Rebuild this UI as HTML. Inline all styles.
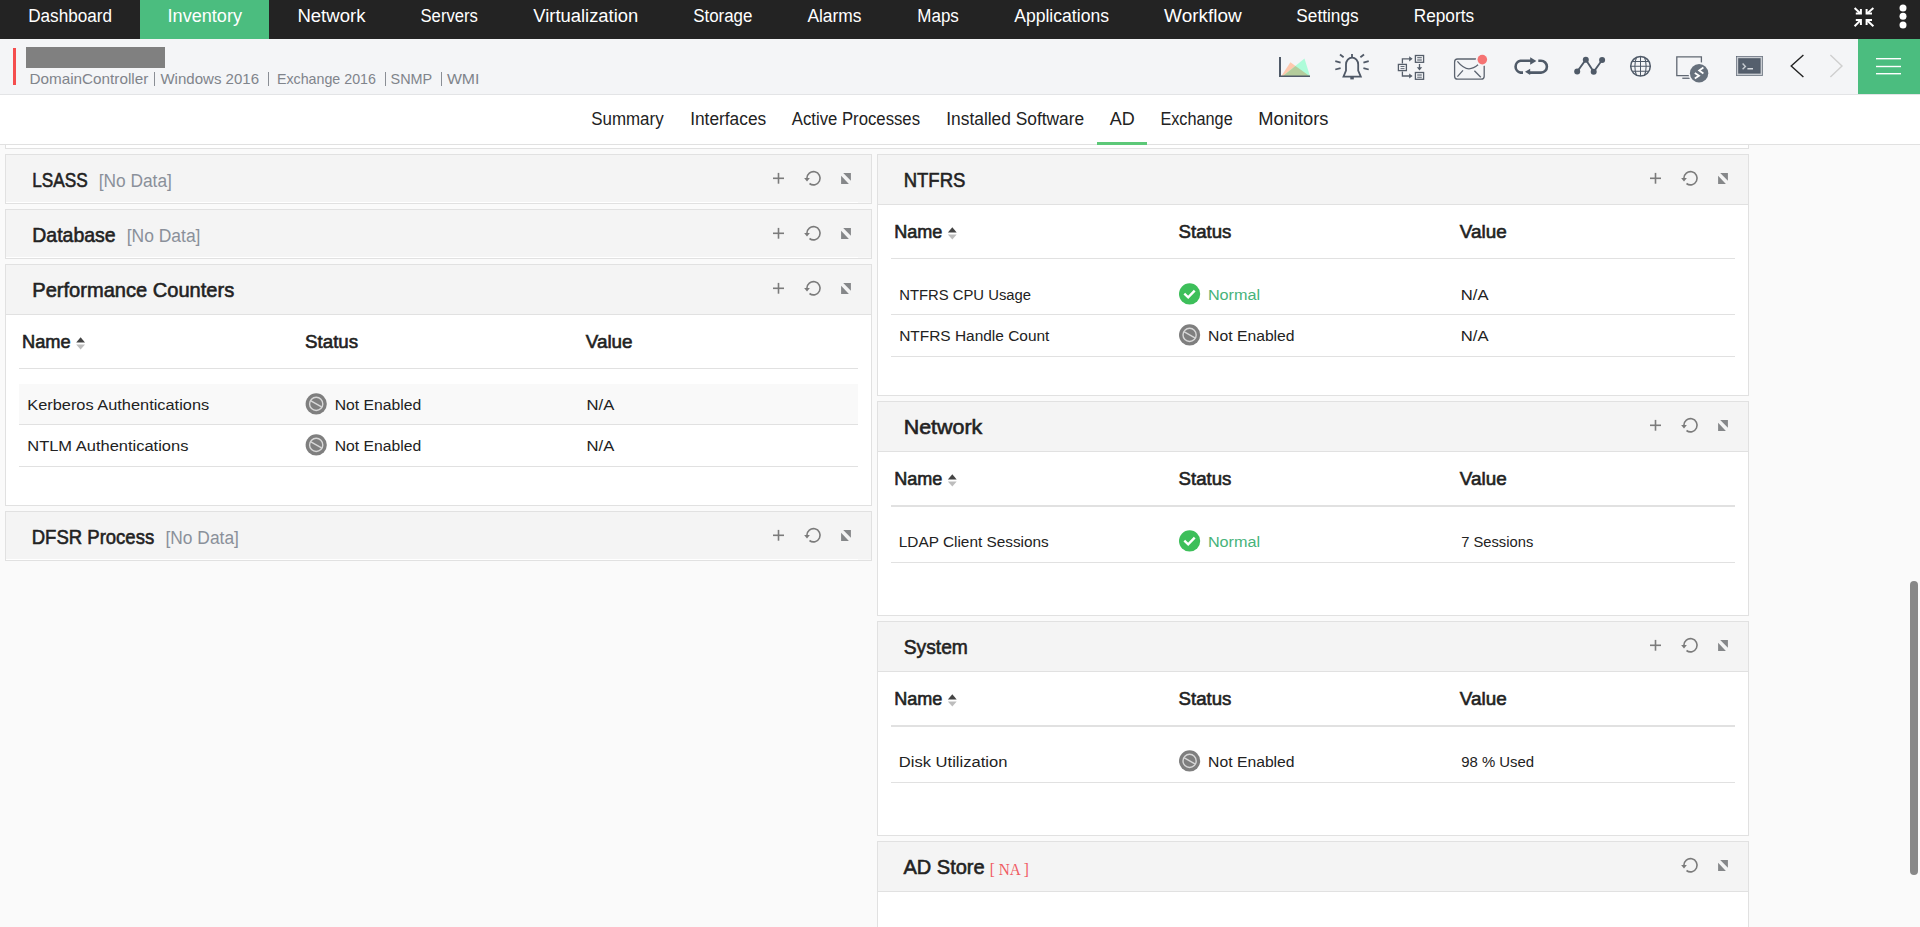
<!DOCTYPE html>
<html><head><meta charset="utf-8"><title>AD</title>
<style>
html,body{margin:0;padding:0;width:1920px;height:927px;overflow:hidden;background:#fafafa}
svg{display:block;font-family:"Liberation Sans", sans-serif}
</style></head><body>
<svg width="1920" height="927" viewBox="0 0 1920 927">
<rect x="0" y="0" width="1920" height="927" fill="#fafafa" />
<rect x="0" y="0" width="1920" height="39" fill="#232323" />
<rect x="140" y="0" width="129" height="39" fill="#4bbd7f" />
<text x="28.20" y="22" font-size="18" fill="#ffffff" textLength="83.80" lengthAdjust="spacingAndGlyphs">Dashboard</text>
<text x="167.60" y="22" font-size="18" fill="#ffffff" textLength="74.41" lengthAdjust="spacingAndGlyphs">Inventory</text>
<text x="297.40" y="22" font-size="18" fill="#ffffff" textLength="68.05" lengthAdjust="spacingAndGlyphs">Network</text>
<text x="420.50" y="22" font-size="18" fill="#ffffff" textLength="57.41" lengthAdjust="spacingAndGlyphs">Servers</text>
<text x="533.30" y="22" font-size="18" fill="#ffffff" textLength="104.90" lengthAdjust="spacingAndGlyphs">Virtualization</text>
<text x="693.20" y="22" font-size="18" fill="#ffffff" textLength="59.21" lengthAdjust="spacingAndGlyphs">Storage</text>
<text x="807.40" y="22" font-size="18" fill="#ffffff" textLength="54.11" lengthAdjust="spacingAndGlyphs">Alarms</text>
<text x="917.30" y="22" font-size="18" fill="#ffffff" textLength="41.51" lengthAdjust="spacingAndGlyphs">Maps</text>
<text x="1014.20" y="22" font-size="18" fill="#ffffff" textLength="94.80" lengthAdjust="spacingAndGlyphs">Applications</text>
<text x="1164.10" y="22" font-size="18" fill="#ffffff" textLength="77.55" lengthAdjust="spacingAndGlyphs">Workflow</text>
<text x="1296.30" y="22" font-size="18" fill="#ffffff" textLength="62.31" lengthAdjust="spacingAndGlyphs">Settings</text>
<text x="1413.70" y="22" font-size="18" fill="#ffffff" textLength="60.41" lengthAdjust="spacingAndGlyphs">Reports</text>
<rect x="0" y="39" width="1920" height="55" fill="#f4f5f7" />
<rect x="0" y="94" width="1920" height="1" fill="#e3e4e6" />
<rect x="13" y="48" width="3" height="37" fill="#f54e4e" />
<rect x="26" y="47" width="139" height="21" fill="#808080" />
<text x="29.50" y="84" font-size="15" fill="#80848b" textLength="118.75" lengthAdjust="spacingAndGlyphs">DomainController</text>
<text x="160.40" y="84" font-size="15" fill="#80848b" textLength="98.70" lengthAdjust="spacingAndGlyphs">Windows 2016</text>
<text x="276.90" y="84" font-size="15" fill="#80848b" textLength="99.10" lengthAdjust="spacingAndGlyphs">Exchange 2016</text>
<text x="390.60" y="84" font-size="15" fill="#80848b" textLength="41.65" lengthAdjust="spacingAndGlyphs">SNMP</text>
<text x="446.90" y="84" font-size="15" fill="#80848b" textLength="32.50" lengthAdjust="spacingAndGlyphs">WMI</text>
<rect x="154" y="72" width="1" height="14" fill="#8a8e95" />
<rect x="268" y="72" width="1" height="14" fill="#8a8e95" />
<rect x="385" y="72" width="1" height="14" fill="#8a8e95" />
<rect x="441" y="72" width="1" height="14" fill="#8a8e95" />
<rect x="1858" y="39" width="62" height="55" fill="#4bbd7f" />
<rect x="0" y="95" width="1920" height="49" fill="#ffffff" />
<rect x="0" y="144" width="1920" height="1" fill="#e1e1e1" />
<text x="591.20" y="125" font-size="17.5" fill="#222" textLength="72.41" lengthAdjust="spacingAndGlyphs">Summary</text>
<text x="690.20" y="125" font-size="17.5" fill="#222" textLength="76.00" lengthAdjust="spacingAndGlyphs">Interfaces</text>
<text x="791.80" y="125" font-size="17.5" fill="#222" textLength="128.21" lengthAdjust="spacingAndGlyphs">Active Processes</text>
<text x="946.30" y="125" font-size="17.5" fill="#222" textLength="137.90" lengthAdjust="spacingAndGlyphs">Installed Software</text>
<text x="1109.80" y="125" font-size="17.5" fill="#222" textLength="25.00" lengthAdjust="spacingAndGlyphs">AD</text>
<text x="1160.40" y="125" font-size="17.5" fill="#222" textLength="72.30" lengthAdjust="spacingAndGlyphs">Exchange</text>
<text x="1258.30" y="125" font-size="17.5" fill="#222" textLength="70.19" lengthAdjust="spacingAndGlyphs">Monitors</text>
<rect x="1097" y="142" width="50" height="3" fill="#5cc878" />
<rect x="5" y="145" width="1744" height="4" fill="#ffffff" stroke="none"/>
<rect x="5" y="148" width="1744" height="1" fill="#e1e1e1" />
<rect x="5" y="145" width="1" height="4" fill="#e1e1e1" />
<rect x="1748" y="145" width="1" height="4" fill="#e1e1e1" />
<rect x="5" y="154" width="867" height="50" fill="#f4f4f4" />
<rect x="5" y="202" width="867" height="1" fill="#f9f9f9" />
<rect x="5" y="202" width="853" height="1" fill="#ffffff" />
<rect x="5" y="154" width="867" height="1" fill="#e1e1e1" />
<rect x="5" y="203" width="867" height="1" fill="#e1e1e1" />
<rect x="5" y="154" width="1" height="50" fill="#e1e1e1" />
<rect x="871" y="154" width="1" height="50" fill="#e1e1e1" />
<text x="32.30" y="187" font-size="21" fill="#222" stroke="#222" stroke-width="0.6" textLength="55.50" lengthAdjust="spacingAndGlyphs">LSASS</text>
<text x="98.70" y="187" font-size="18" fill="#8a909a" textLength="73.20" lengthAdjust="spacingAndGlyphs">[No Data]</text>
<rect x="773.0" y="177.5" width="11" height="1.6" fill="#7b7b7b" />
<rect x="777.7" y="172.9" width="1.6" height="10.8" fill="#7b7b7b" />
<path d="M806.90,178.30 A6.6,6.6 0 1 1 809.50,183.50" fill="none" stroke="#7b7b7b" stroke-width="1.6"/>
<path d="M804.10,177.90 L809.90,177.90 L807.00,181.50 Z" fill="#7b7b7b"/>
<path d="M843.20,173.10 L850.90,173.10 L850.90,180.80 Z M841.10,175.80 L841.10,183.90 L848.90,183.90 Z" fill="#858789"/>
<rect x="5" y="209" width="867" height="50" fill="#f4f4f4" />
<rect x="5" y="257" width="867" height="1" fill="#f9f9f9" />
<rect x="5" y="257" width="853" height="1" fill="#ffffff" />
<rect x="5" y="209" width="867" height="1" fill="#e1e1e1" />
<rect x="5" y="258" width="867" height="1" fill="#e1e1e1" />
<rect x="5" y="209" width="1" height="50" fill="#e1e1e1" />
<rect x="871" y="209" width="1" height="50" fill="#e1e1e1" />
<text x="32.30" y="242" font-size="21" fill="#222" stroke="#222" stroke-width="0.6" textLength="83.40" lengthAdjust="spacingAndGlyphs">Database</text>
<text x="126.70" y="242" font-size="18" fill="#8a909a" textLength="73.80" lengthAdjust="spacingAndGlyphs">[No Data]</text>
<rect x="773.0" y="232.5" width="11" height="1.6" fill="#7b7b7b" />
<rect x="777.7" y="227.9" width="1.6" height="10.8" fill="#7b7b7b" />
<path d="M806.90,233.30 A6.6,6.6 0 1 1 809.50,238.50" fill="none" stroke="#7b7b7b" stroke-width="1.6"/>
<path d="M804.10,232.90 L809.90,232.90 L807.00,236.50 Z" fill="#7b7b7b"/>
<path d="M843.20,228.10 L850.90,228.10 L850.90,235.80 Z M841.10,230.80 L841.10,238.90 L848.90,238.90 Z" fill="#858789"/>
<rect x="5" y="314" width="867" height="192" fill="#ffffff" />
<rect x="5" y="505" width="867" height="1" fill="#e1e1e1" />
<rect x="5" y="314" width="1" height="192" fill="#e1e1e1" />
<rect x="871" y="314" width="1" height="192" fill="#e1e1e1" />
<rect x="5" y="264" width="867" height="51" fill="#f4f4f4" />
<rect x="5" y="264" width="867" height="1" fill="#e1e1e1" />
<rect x="5" y="314" width="867" height="1" fill="#e1e1e1" />
<rect x="5" y="264" width="1" height="51" fill="#e1e1e1" />
<rect x="871" y="264" width="1" height="51" fill="#e1e1e1" />
<text x="32.30" y="297" font-size="21" fill="#222" stroke="#222" stroke-width="0.6" textLength="201.90" lengthAdjust="spacingAndGlyphs">Performance Counters</text>
<rect x="773.0" y="287.5" width="11" height="1.6" fill="#7b7b7b" />
<rect x="777.7" y="282.90000000000003" width="1.6" height="10.8" fill="#7b7b7b" />
<path d="M806.90,288.30 A6.6,6.6 0 1 1 809.50,293.50" fill="none" stroke="#7b7b7b" stroke-width="1.6"/>
<path d="M804.10,287.90 L809.90,287.90 L807.00,291.50 Z" fill="#7b7b7b"/>
<path d="M843.20,283.10 L850.90,283.10 L850.90,290.80 Z M841.10,285.80 L841.10,293.90 L848.90,293.90 Z" fill="#858789"/>
<text x="22.00" y="348" font-size="18.5" fill="#222" stroke="#222" stroke-width="0.6" textLength="48.69" lengthAdjust="spacingAndGlyphs">Name</text>
<path d="M76.2,342.4 L80.60000000000001,337.2 L85.0,342.4 Z" fill="#444"/>
<path d="M76.2,344.5 L80.60000000000001,349.5 L85.0,344.5 Z" fill="#bdbdbd"/>
<text x="305.10" y="348" font-size="18.5" fill="#222" stroke="#222" stroke-width="0.6" textLength="53.00" lengthAdjust="spacingAndGlyphs">Status</text>
<text x="585.70" y="348" font-size="18.5" fill="#222" stroke="#222" stroke-width="0.6" textLength="46.91" lengthAdjust="spacingAndGlyphs">Value</text>
<rect x="19" y="368" width="839" height="1" fill="#e1e1e1" />
<rect x="19" y="384" width="839" height="40" fill="#f9f9f9" />
<rect x="19" y="424" width="839" height="1" fill="#e1e1e1" />
<text x="27.25" y="410" font-size="15.5" fill="#222" textLength="181.95" lengthAdjust="spacingAndGlyphs">Kerberos Authentications</text>
<circle cx="316.2" cy="403.9" r="10.6" fill="#7f7f7f"/>
<circle cx="316.2" cy="403.9" r="6.6" fill="none" stroke="#d8d8d8" stroke-width="1.4"/>
<path d="M310.9,400.9 L321.5,406.9" stroke="#d8d8d8" stroke-width="1.4"/>
<text x="334.70" y="410" font-size="15.5" fill="#222" textLength="86.50" lengthAdjust="spacingAndGlyphs">Not Enabled</text>
<text x="586.60" y="410" font-size="15.5" fill="#222" textLength="27.70" lengthAdjust="spacingAndGlyphs">N/A</text>
<rect x="19" y="466" width="839" height="1" fill="#e1e1e1" />
<text x="27.25" y="451" font-size="15.5" fill="#222" textLength="161.15" lengthAdjust="spacingAndGlyphs">NTLM Authentications</text>
<circle cx="316.2" cy="444.9" r="10.6" fill="#7f7f7f"/>
<circle cx="316.2" cy="444.9" r="6.6" fill="none" stroke="#d8d8d8" stroke-width="1.4"/>
<path d="M310.9,441.9 L321.5,447.9" stroke="#d8d8d8" stroke-width="1.4"/>
<text x="334.70" y="451" font-size="15.5" fill="#222" textLength="86.50" lengthAdjust="spacingAndGlyphs">Not Enabled</text>
<text x="586.60" y="451" font-size="15.5" fill="#222" textLength="27.70" lengthAdjust="spacingAndGlyphs">N/A</text>
<rect x="5" y="511" width="867" height="50" fill="#f4f4f4" />
<rect x="5" y="559" width="867" height="1" fill="#f9f9f9" />
<rect x="5" y="559" width="853" height="1" fill="#ffffff" />
<rect x="5" y="511" width="867" height="1" fill="#e1e1e1" />
<rect x="5" y="560" width="867" height="1" fill="#e1e1e1" />
<rect x="5" y="511" width="1" height="50" fill="#e1e1e1" />
<rect x="871" y="511" width="1" height="50" fill="#e1e1e1" />
<text x="31.70" y="544" font-size="21" fill="#222" stroke="#222" stroke-width="0.6" textLength="122.51" lengthAdjust="spacingAndGlyphs">DFSR Process</text>
<text x="165.50" y="544" font-size="18" fill="#8a909a" textLength="73.40" lengthAdjust="spacingAndGlyphs">[No Data]</text>
<rect x="773.0" y="534.5" width="11" height="1.6" fill="#7b7b7b" />
<rect x="777.7" y="529.9" width="1.6" height="10.8" fill="#7b7b7b" />
<path d="M806.90,535.30 A6.6,6.6 0 1 1 809.50,540.50" fill="none" stroke="#7b7b7b" stroke-width="1.6"/>
<path d="M804.10,534.90 L809.90,534.90 L807.00,538.50 Z" fill="#7b7b7b"/>
<path d="M843.20,530.10 L850.90,530.10 L850.90,537.80 Z M841.10,532.80 L841.10,540.90 L848.90,540.90 Z" fill="#858789"/>
<rect x="877" y="204" width="872" height="192" fill="#ffffff" />
<rect x="877" y="395" width="872" height="1" fill="#e1e1e1" />
<rect x="877" y="204" width="1" height="192" fill="#e1e1e1" />
<rect x="1748" y="204" width="1" height="192" fill="#e1e1e1" />
<rect x="877" y="154" width="872" height="51" fill="#f4f4f4" />
<rect x="877" y="154" width="872" height="1" fill="#e1e1e1" />
<rect x="877" y="204" width="872" height="1" fill="#e1e1e1" />
<rect x="877" y="154" width="1" height="51" fill="#e1e1e1" />
<rect x="1748" y="154" width="1" height="51" fill="#e1e1e1" />
<text x="903.70" y="187" font-size="21" fill="#222" stroke="#222" stroke-width="0.6" textLength="61.70" lengthAdjust="spacingAndGlyphs">NTFRS</text>
<rect x="1650.0" y="177.5" width="11" height="1.6" fill="#7b7b7b" />
<rect x="1654.7" y="172.9" width="1.6" height="10.8" fill="#7b7b7b" />
<path d="M1683.90,178.30 A6.6,6.6 0 1 1 1686.50,183.50" fill="none" stroke="#7b7b7b" stroke-width="1.6"/>
<path d="M1681.10,177.90 L1686.90,177.90 L1684.00,181.50 Z" fill="#7b7b7b"/>
<path d="M1720.20,173.10 L1727.90,173.10 L1727.90,180.80 Z M1718.10,175.80 L1718.10,183.90 L1725.90,183.90 Z" fill="#858789"/>
<text x="894.25" y="238" font-size="18.5" fill="#222" stroke="#222" stroke-width="0.6" textLength="48.14" lengthAdjust="spacingAndGlyphs">Name</text>
<path d="M947.9,232.39999999999998 L952.3,227.2 L956.6999999999999,232.39999999999998 Z" fill="#444"/>
<path d="M947.9,234.5 L952.3,239.5 L956.6999999999999,234.5 Z" fill="#bdbdbd"/>
<text x="1178.60" y="238" font-size="18.5" fill="#222" stroke="#222" stroke-width="0.6" textLength="52.80" lengthAdjust="spacingAndGlyphs">Status</text>
<text x="1459.80" y="238" font-size="18.5" fill="#222" stroke="#222" stroke-width="0.6" textLength="46.91" lengthAdjust="spacingAndGlyphs">Value</text>
<rect x="891" y="258" width="844" height="1" fill="#e1e1e1" />
<rect x="891" y="314" width="844" height="1" fill="#e1e1e1" />
<text x="899.20" y="300" font-size="15.5" fill="#222" textLength="131.90" lengthAdjust="spacingAndGlyphs">NTFRS CPU Usage</text>
<circle cx="1189.6" cy="293.9" r="10.6" fill="#3dbf5a"/>
<path d="M1184.3,293.7 L1188.1999999999998,297.4 L1194.6999999999998,290.59999999999997" fill="none" stroke="#fff" stroke-width="2.4"/>
<text x="1207.90" y="300" font-size="15.5" fill="#47b37a" textLength="52.19" lengthAdjust="spacingAndGlyphs">Normal</text>
<text x="1460.80" y="300" font-size="15.5" fill="#222" textLength="27.70" lengthAdjust="spacingAndGlyphs">N/A</text>
<rect x="891" y="356" width="844" height="1" fill="#e1e1e1" />
<text x="899.20" y="341" font-size="15.5" fill="#222" textLength="150.20" lengthAdjust="spacingAndGlyphs">NTFRS Handle Count</text>
<circle cx="1189.6" cy="334.9" r="10.6" fill="#7f7f7f"/>
<circle cx="1189.6" cy="334.9" r="6.6" fill="none" stroke="#d8d8d8" stroke-width="1.4"/>
<path d="M1184.3,331.9 L1194.8999999999999,337.9" stroke="#d8d8d8" stroke-width="1.4"/>
<text x="1208.10" y="341" font-size="15.5" fill="#222" textLength="86.50" lengthAdjust="spacingAndGlyphs">Not Enabled</text>
<text x="1460.80" y="341" font-size="15.5" fill="#222" textLength="27.70" lengthAdjust="spacingAndGlyphs">N/A</text>
<rect x="877" y="451" width="872" height="165" fill="#ffffff" />
<rect x="877" y="615" width="872" height="1" fill="#e1e1e1" />
<rect x="877" y="451" width="1" height="165" fill="#e1e1e1" />
<rect x="1748" y="451" width="1" height="165" fill="#e1e1e1" />
<rect x="877" y="401" width="872" height="51" fill="#f4f4f4" />
<rect x="877" y="401" width="872" height="1" fill="#e1e1e1" />
<rect x="877" y="451" width="872" height="1" fill="#e1e1e1" />
<rect x="877" y="401" width="1" height="51" fill="#e1e1e1" />
<rect x="1748" y="401" width="1" height="51" fill="#e1e1e1" />
<text x="903.70" y="434" font-size="21" fill="#222" stroke="#222" stroke-width="0.6" textLength="78.65" lengthAdjust="spacingAndGlyphs">Network</text>
<rect x="1650.0" y="424.5" width="11" height="1.6" fill="#7b7b7b" />
<rect x="1654.7" y="419.90000000000003" width="1.6" height="10.8" fill="#7b7b7b" />
<path d="M1683.90,425.30 A6.6,6.6 0 1 1 1686.50,430.50" fill="none" stroke="#7b7b7b" stroke-width="1.6"/>
<path d="M1681.10,424.90 L1686.90,424.90 L1684.00,428.50 Z" fill="#7b7b7b"/>
<path d="M1720.20,420.10 L1727.90,420.10 L1727.90,427.80 Z M1718.10,422.80 L1718.10,430.90 L1725.90,430.90 Z" fill="#858789"/>
<text x="894.25" y="485" font-size="18.5" fill="#222" stroke="#222" stroke-width="0.6" textLength="48.14" lengthAdjust="spacingAndGlyphs">Name</text>
<path d="M947.9,479.4 L952.3,474.2 L956.6999999999999,479.4 Z" fill="#444"/>
<path d="M947.9,481.5 L952.3,486.5 L956.6999999999999,481.5 Z" fill="#bdbdbd"/>
<text x="1178.60" y="485" font-size="18.5" fill="#222" stroke="#222" stroke-width="0.6" textLength="52.80" lengthAdjust="spacingAndGlyphs">Status</text>
<text x="1459.80" y="485" font-size="18.5" fill="#222" stroke="#222" stroke-width="0.6" textLength="46.91" lengthAdjust="spacingAndGlyphs">Value</text>
<rect x="891" y="505" width="844" height="2" fill="#e1e1e1" />
<rect x="891" y="562" width="844" height="1" fill="#e1e1e1" />
<text x="898.80" y="547" font-size="15.5" fill="#222" textLength="150.00" lengthAdjust="spacingAndGlyphs">LDAP Client Sessions</text>
<circle cx="1189.6" cy="540.9" r="10.6" fill="#3dbf5a"/>
<path d="M1184.3,540.6999999999999 L1188.1999999999998,544.4 L1194.6999999999998,537.6" fill="none" stroke="#fff" stroke-width="2.4"/>
<text x="1207.90" y="547" font-size="15.5" fill="#47b37a" textLength="52.19" lengthAdjust="spacingAndGlyphs">Normal</text>
<text x="1461.20" y="547" font-size="15.5" fill="#222" textLength="72.09" lengthAdjust="spacingAndGlyphs">7 Sessions</text>
<rect x="877" y="671" width="872" height="165" fill="#ffffff" />
<rect x="877" y="835" width="872" height="1" fill="#e1e1e1" />
<rect x="877" y="671" width="1" height="165" fill="#e1e1e1" />
<rect x="1748" y="671" width="1" height="165" fill="#e1e1e1" />
<rect x="877" y="621" width="872" height="51" fill="#f4f4f4" />
<rect x="877" y="621" width="872" height="1" fill="#e1e1e1" />
<rect x="877" y="671" width="872" height="1" fill="#e1e1e1" />
<rect x="877" y="621" width="1" height="51" fill="#e1e1e1" />
<rect x="1748" y="621" width="1" height="51" fill="#e1e1e1" />
<text x="903.70" y="654" font-size="21" fill="#222" stroke="#222" stroke-width="0.6" textLength="64.20" lengthAdjust="spacingAndGlyphs">System</text>
<rect x="1650.0" y="644.5" width="11" height="1.6" fill="#7b7b7b" />
<rect x="1654.7" y="639.9" width="1.6" height="10.8" fill="#7b7b7b" />
<path d="M1683.90,645.30 A6.6,6.6 0 1 1 1686.50,650.50" fill="none" stroke="#7b7b7b" stroke-width="1.6"/>
<path d="M1681.10,644.90 L1686.90,644.90 L1684.00,648.50 Z" fill="#7b7b7b"/>
<path d="M1720.20,640.10 L1727.90,640.10 L1727.90,647.80 Z M1718.10,642.80 L1718.10,650.90 L1725.90,650.90 Z" fill="#858789"/>
<text x="894.25" y="705" font-size="18.5" fill="#222" stroke="#222" stroke-width="0.6" textLength="48.14" lengthAdjust="spacingAndGlyphs">Name</text>
<path d="M947.9,699.4000000000001 L952.3,694.2 L956.6999999999999,699.4000000000001 Z" fill="#444"/>
<path d="M947.9,701.5 L952.3,706.5 L956.6999999999999,701.5 Z" fill="#bdbdbd"/>
<text x="1178.60" y="705" font-size="18.5" fill="#222" stroke="#222" stroke-width="0.6" textLength="52.80" lengthAdjust="spacingAndGlyphs">Status</text>
<text x="1459.80" y="705" font-size="18.5" fill="#222" stroke="#222" stroke-width="0.6" textLength="46.91" lengthAdjust="spacingAndGlyphs">Value</text>
<rect x="891" y="725" width="844" height="2" fill="#e1e1e1" />
<rect x="891" y="782" width="844" height="1" fill="#e1e1e1" />
<text x="898.80" y="767" font-size="15.5" fill="#222" textLength="108.60" lengthAdjust="spacingAndGlyphs">Disk Utilization</text>
<circle cx="1189.6" cy="760.9" r="10.6" fill="#7f7f7f"/>
<circle cx="1189.6" cy="760.9" r="6.6" fill="none" stroke="#d8d8d8" stroke-width="1.4"/>
<path d="M1184.3,757.9 L1194.8999999999999,763.9" stroke="#d8d8d8" stroke-width="1.4"/>
<text x="1208.10" y="767" font-size="15.5" fill="#222" textLength="86.50" lengthAdjust="spacingAndGlyphs">Not Enabled</text>
<text x="1461.20" y="767" font-size="15.5" fill="#222" textLength="72.99" lengthAdjust="spacingAndGlyphs">98 % Used</text>
<rect x="877" y="891" width="872" height="50" fill="#ffffff" />
<rect x="877" y="940" width="872" height="1" fill="#e1e1e1" />
<rect x="877" y="891" width="1" height="50" fill="#e1e1e1" />
<rect x="1748" y="891" width="1" height="50" fill="#e1e1e1" />
<rect x="877" y="841" width="872" height="51" fill="#f4f4f4" />
<rect x="877" y="841" width="872" height="1" fill="#e1e1e1" />
<rect x="877" y="891" width="872" height="1" fill="#e1e1e1" />
<rect x="877" y="841" width="1" height="51" fill="#e1e1e1" />
<rect x="1748" y="841" width="1" height="51" fill="#e1e1e1" />
<text x="903.40" y="874" font-size="21" fill="#222" stroke="#222" stroke-width="0.6" textLength="81.30" lengthAdjust="spacingAndGlyphs">AD Store</text>
<text x="989.75" y="874.5" font-size="16.5" fill="#f05a63" font-family='"Liberation Serif", serif' textLength="39.05" lengthAdjust="spacingAndGlyphs">[ NA ]</text>
<path d="M1683.90,865.30 A6.6,6.6 0 1 1 1686.50,870.50" fill="none" stroke="#7b7b7b" stroke-width="1.6"/>
<path d="M1681.10,864.90 L1686.90,864.90 L1684.00,868.50 Z" fill="#7b7b7b"/>
<path d="M1720.20,860.10 L1727.90,860.10 L1727.90,867.80 Z M1718.10,862.80 L1718.10,870.90 L1725.90,870.90 Z" fill="#858789"/>
<rect x="1910" y="581" width="8" height="294" fill="#888888" rx="4"/>
<!-- compress icon -->
<g stroke="#fff" stroke-width="2" fill="none" stroke-linecap="butt">
  <path d="M1854.6,7.9 L1860.4,13.4"/><path d="M1855.8,13.6 L1860.9,13.6 L1860.9,8.9"/>
  <path d="M1873.4,7.9 L1867.2,13.4"/><path d="M1872,13.6 L1866.6,13.6 L1866.6,8.9"/>
  <path d="M1854.6,26.2 L1860.4,20.4"/><path d="M1855.8,20 L1860.9,20 L1860.9,25"/>
  <path d="M1873.4,26.2 L1867.2,20.4"/><path d="M1872,20 L1866.6,20 L1866.6,25"/>
</g>
<circle cx="1903" cy="8" r="3.5" fill="#fff"/>
<circle cx="1903" cy="16.3" r="3.5" fill="#fff"/>
<circle cx="1903" cy="25" r="3.5" fill="#fff"/>
<!-- hamburger -->
<rect x="1876" y="58" width="25" height="1.4" fill="#fff"/>
<rect x="1876" y="65.8" width="25" height="1.4" fill="#fff"/>
<rect x="1876" y="73" width="25" height="1.4" fill="#fff"/>
<!-- chart -->
<path d="M1281.4,76 L1290.4,62.2 L1309.5,76 Z" fill="#ffc9ae"/>
<path d="M1283,76 L1304.5,58.6 L1309.9,76 Z" fill="#adfcd9"/>
<path d="M1283,76 L1295.5,65.9 L1309.5,76 Z" fill="#b4cc9c"/>
<rect x="1279" y="57" width="2" height="20" fill="#505a68"/>
<rect x="1279" y="75.5" width="31" height="1.5" fill="#505a68"/>
<!-- bell -->
<g fill="none" stroke="#4f5866" stroke-width="1.8">
  <path d="M1343.5,76.6 L1346,70.5 L1346,64.6 A6.1,6.9 0 0 1 1358.2,64.6 L1358.2,70.5 L1360.8,76.6 Z"/>
  <path d="M1352,54 L1352,57.6"/>
  <path d="M1340,54.5 L1343.6,57.3"/><path d="M1364,54.5 L1360.4,57.3"/>
  <path d="M1335.3,61.2 L1340.6,62.6"/><path d="M1368.7,61.2 L1363.4,62.6"/>
  <path d="M1335.3,69.5 L1340.6,68.1"/><path d="M1368.7,69.5 L1363.4,68.1"/>
</g>
<rect x="1350.3" y="77" width="3.5" height="2.4" fill="#4f5866"/>
<!-- workflow -->
<g fill="none" stroke="#555e6a" stroke-width="1.3">
  <rect x="1398.4" y="64.4" width="8" height="6.2"/>
  <rect x="1415.4" y="55.5" width="8.2" height="6.8"/>
  <rect x="1415.4" y="72.5" width="8.2" height="6.8"/>
  <path d="M1402.4,63.5 L1402.4,58.8 L1410,58.8"/>
  <path d="M1402.4,71.5 L1402.4,76 L1410,76"/>
  <path d="M1419.5,64 L1419.5,68"/>
</g>
<g fill="#555e6a">
  <path d="M1409.2,56.3 L1412.6,58.8 L1409.2,61.4 Z"/>
  <path d="M1409.2,73.4 L1412.6,76 L1409.2,78.6 Z"/>
  <path d="M1416.8,67.2 L1422.2,67.2 L1419.5,70.4 Z"/>
  <rect x="1400.5" y="66" width="4" height="0.9"/><rect x="1400.5" y="68.2" width="4" height="0.9"/>
</g>
<g fill="#9aa0a8">
  <rect x="1417.2" y="58.6" width="4.6" height="2.4"/>
  <rect x="1417.2" y="73.9" width="4.6" height="2.4"/>
</g>
<g fill="#555e6a">
  <rect x="1417.2" y="57.2" width="4.6" height="0.8"/>
  <rect x="1417.2" y="76.9" width="4.6" height="0.8"/>
</g>
<!-- mail -->
<rect x="1454.6" y="59" width="29.6" height="20.2" rx="3" fill="none" stroke="#5c6470" stroke-width="1.3"/>
<path d="M1457.4,61.4 C1462,67 1465.5,68.8 1469,68.8 C1472.5,68.8 1475.5,67 1478.6,64.3" fill="none" stroke="#5c6470" stroke-width="1.3"/>
<path d="M1457.4,76.6 L1463,70.4 M1474.4,70.7 L1480.8,77.2" fill="none" stroke="#5c6470" stroke-width="1.3"/>
<circle cx="1482.3" cy="59.6" r="6.5" fill="#f4f5f7"/>
<circle cx="1482.3" cy="59.6" r="4.8" fill="#f57373"/>
<!-- loop -->
<g fill="none" stroke="#4f5a68" stroke-width="2.6">
  <path d="M1531,60.8 L1520.5,60.8 A6,6 0 0 0 1520.5,72.6 L1523,72.6"/>
  <path d="M1538.3,60.8 L1541,60.8 A5.9,5.9 0 0 1 1541,72.6 L1529.5,72.6"/>
</g>
<path d="M1530.2,57.2 L1536.4,60.9 L1530.2,64.7 Z" fill="#4f5a68"/>
<path d="M1530.2,68.7 L1525,71.8 L1530.2,74.9 Z" fill="#4f5a68"/>
<!-- graph -->
<path d="M1577.2,71.6 L1585.8,59.7 L1593.7,71.8 L1602.1,59.9" fill="none" stroke="#4f5a68" stroke-width="1.8"/>
<g fill="#4f5a68">
  <circle cx="1577.2" cy="71.6" r="3"/><circle cx="1585.8" cy="59.7" r="3"/>
  <circle cx="1593.7" cy="71.8" r="3"/><circle cx="1602.1" cy="59.9" r="3"/>
</g>
<!-- globe -->
<circle cx="1640.5" cy="66.3" r="9.8" fill="none" stroke="#4f5a68" stroke-width="1.5"/>
<g fill="none" stroke="#4f5a68" stroke-width="1.05">
  <path d="M1631.9,61.4 L1649.1,61.4 M1630.8,66.3 L1650.2,66.3 M1631.9,71.3 L1649.1,71.3"/>
  <path d="M1640.5,56.6 L1640.5,76"/>
  <path d="M1636.6,57.2 C1634.3,61.5 1634.3,71 1636.6,75.4"/>
  <path d="M1644.4,57.2 C1646.7,61.5 1646.7,71 1644.4,75.4"/>
</g>
<!-- remote desktop -->
<g fill="none" stroke="#606873" stroke-width="1.3">
  <path d="M1689,75.6 L1676.8,75.6 L1676.8,56.8 L1701.4,56.8 L1701.4,62.5"/>
</g>
<rect x="1682.3" y="77.6" width="7.4" height="1.3" fill="#606873"/>
<circle cx="1699.1" cy="73.2" r="10.6" fill="#f4f5f7"/>
<circle cx="1699.1" cy="73.2" r="9.2" fill="#66707c"/>
<path d="M1703.4,67.6 L1699.2,70.6 L1703.4,73.6 M1694.8,73 L1699,75.8 L1694.8,78.6" fill="none" stroke="#fff" stroke-width="1.8"/>
<!-- terminal -->
<rect x="1736" y="56" width="26.8" height="19.8" fill="#505a68"/>
<rect x="1737.4" y="57.4" width="24" height="17" fill="none" stroke="#c8ccd2" stroke-width="1.6"/>
<rect x="1739.2" y="59.2" width="20.6" height="13.4" fill="#555f6d"/>
<path d="M1742.6,63.5 L1745.4,66.4 L1742.6,69.2" fill="none" stroke="#c8ccd2" stroke-width="1.4"/>
<rect x="1747.4" y="68" width="5.6" height="1.5" fill="#d6d9de"/>
<!-- chevrons -->
<path d="M1803.4,55 L1791.2,66 L1803.4,77" fill="none" stroke="#222" stroke-width="1.4"/>
<path d="M1830.4,55 L1842,66 L1830.4,77" fill="none" stroke="#cfcfcf" stroke-width="1.4"/>

</svg>
</body></html>
